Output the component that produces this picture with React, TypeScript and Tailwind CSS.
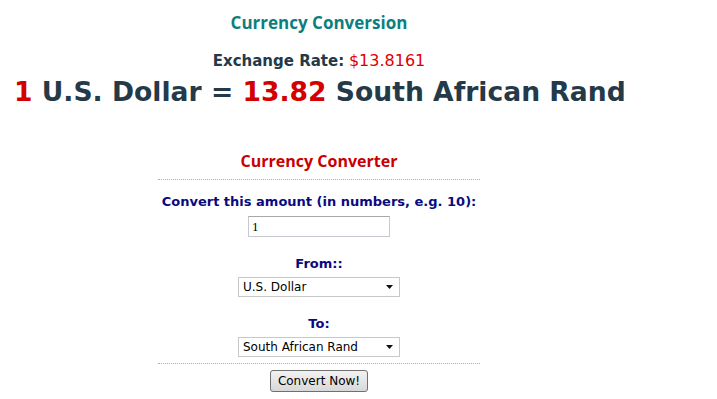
export default function App() {
  return (
    <div className="w-[638px] bg-white font-['DejaVu_Sans',sans-serif]">
      {/* Page heading */}
      <h1 className="pt-[12px] h-[36px] text-center font-['Open_Sans',sans-serif] text-[17px] leading-[22px] font-bold text-[#0b7f7f]">
        Currency Conversion
      </h1>

      {/* Rate */}
      <div className="mt-[15px] text-center text-[15px] leading-[20px] text-[#243a48]">
        <span className="font-bold">Exchange Rate:</span>{' '}
        <span className="text-[16px] text-[#e00000]">$13.8161</span>
      </div>
      <div className="mt-[4px] pl-[14px] whitespace-nowrap text-[26.6px] leading-[34px] font-bold text-[#243a48]">
        <span className="text-[#d40000]">1</span> U.S. Dollar ={' '}
        <span className="text-[#d40000]">13.82</span> South African Rand
      </div>

      {/* Converter box */}
      <div className="mt-[41px] mx-auto w-[322px] flex flex-col items-center">
        <h2 className="h-[29px] font-['Open_Sans',sans-serif] text-[16px] leading-[22px] font-bold text-[#c80000]">
          Currency Converter
        </h2>
        <div className="w-full border-t border-dotted border-[#b0b0b0]" />

        <label className="mt-[14px] text-[13px] leading-[16px] font-bold text-[#0a0a80]">
          Convert this amount (in numbers, e.g. 10):
        </label>
        <input
          defaultValue="1"
          className="mt-[6px] w-[142px] h-[21px] px-[3px] border border-[#c8c8d0] border-t-[#a8a8a8] font-['Liberation_Serif',serif] text-[13px] text-black outline-none"
        />

        <label className="mt-[19px] text-[13px] leading-[16px] font-bold text-[#0a0a80]">
          From::
        </label>
        <Select value="U.S. Dollar" className="mt-[5px]" />

        <label className="mt-[19px] text-[13px] leading-[16px] font-bold text-[#0a0a80]">
          To:
        </label>
        <Select value="South African Rand" className="mt-[5px]" />

        <div className="mt-[6px] w-full border-t border-dotted border-[#b0b0b0]" />
        <button className="mt-[6px] w-[98px] h-[22px] rounded-[3px] border border-[#707070] bg-gradient-to-b from-[#f2f2f2] to-[#d8d8d8] text-[12px] text-black">
          Convert Now!
        </button>
      </div>
    </div>
  );
}

function Select({ value, className }: { value: string; className?: string }) {
  return (
    <div
      className={`${className} w-[162px] h-[20px] border border-[#c8c8c8] flex items-center justify-between pl-[4px] pr-[6px] text-[12px] text-black`}
    >
      <span>{value}</span>
      <svg width="7" height="4" viewBox="0 0 7 4">
        <path d="M0 0h7L3.5 4z" fill="#111" />
      </svg>
    </div>
  );
}
